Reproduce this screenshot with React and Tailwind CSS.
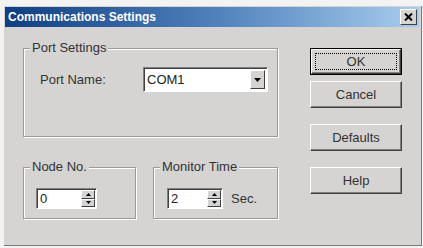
const font = { fontFamily: '"Liberation Sans", Arial, sans-serif' };

const DownArrow = ({ className = '' }) => (
  <svg width="7" height="4" viewBox="0 0 7 4" className={className}>
    <path d="M0 0h7L3.5 4z" fill="#000" />
  </svg>
);

const UpArrow = () => (
  <svg width="5" height="3" viewBox="0 0 5 3">
    <path d="M0 3h5L2.5 0z" fill="#000" />
  </svg>
);

const SmallDown = () => (
  <svg width="5" height="3" viewBox="0 0 5 3">
    <path d="M0 0h5L2.5 3z" fill="#000" />
  </svg>
);

const GroupBox = ({ title, className = '', children }) => (
  <div
    className={`relative border border-[#9a9a9a] shadow-[1px_1px_0_#fff,inset_1px_1px_0_#fff] ${className}`}
  >
    <span className="absolute left-[6px] top-[-9px] bg-[#d5d4d2] px-[2px] text-[13px] leading-[16px] text-[#333]">
      {title}
    </span>
    {children}
  </div>
);

const SpinBox = ({ value, width }) => (
  <div
    className={`flex h-[21px] ${width} border-t border-l border-[#808080] border-b border-r border-b-white border-r-white bg-white shadow-[inset_1px_1px_0_#404040]`}
  >
    <div className="flex-1 pl-[3px] pt-[2px] text-[13px] leading-[16px] text-[#222]">{value}</div>
    <div className="flex w-[15px] flex-col py-[1px] pr-[1px]">
      <div className="flex flex-1 items-center justify-center border-t border-l border-white border-b border-r border-b-[#404040] border-r-[#404040] bg-[#d5d4d2]">
        <UpArrow />
      </div>
      <div className="flex flex-1 items-center justify-center border-t border-l border-white border-b border-r border-b-[#404040] border-r-[#404040] bg-[#d5d4d2]">
        <SmallDown />
      </div>
    </div>
  </div>
);

const Button = ({ label, isDefault }) => (
  <div
    className={`h-[27px] w-[92px] ${isDefault ? 'border border-black' : ''}`}
  >
    <div className="flex h-full w-full items-center justify-center border-t border-l border-white border-b border-r border-b-[#404040] border-r-[#404040] bg-[#d5d4d2] shadow-[inset_-1px_-1px_0_#808080]">
      <span
        className={`flex h-[17px] w-[82px] items-center justify-center text-[13px] text-[#333] ${isDefault ? 'border border-dotted border-black' : ''}`}
      >
        {label}
      </span>
    </div>
  </div>
);

const App = () => {
  return (
    <div className="h-[248px] w-[423px] bg-[#f3f3f3] pl-[4px] pt-[6px] pb-[2px] pr-[1px]" style={font}>
      <div className="flex h-full flex-col border-r border-b border-[#7a7a7a] bg-[#d5d4d2] pl-[1px] pr-[2px] pt-[1px]">
        <div className="flex h-[20px] items-center justify-between bg-gradient-to-r from-[#0f3f82] via-[#4f80bb] to-[#a8cdee] pl-[3px] pr-[2px]">
          <span className="text-[12px] font-bold text-white">Communications Settings</span>
          <div className="flex h-[16px] w-[17px] items-center justify-center border-t border-l border-white border-b border-r border-b-[#404040] border-r-[#404040] bg-[#d5d4d2]">
            <svg width="9" height="8" viewBox="0 0 9 8">
              <path d="M1 0.5l7 7M8 0.5l-7 7" stroke="#000" strokeWidth="2" />
            </svg>
          </div>
        </div>

        <div className="flex pl-[18px] pt-[21px]">
          <div className="flex w-[255px] flex-col">
            <GroupBox title="Port Settings" className="h-[89px]">
              <div className="flex items-center pl-[16px] pt-[18px]">
                <span className="w-[103px] text-[13px] text-[#333]">Port Name:</span>
                <div className="flex h-[25px] w-[125px] items-center border-t border-l border-[#808080] border-b border-r border-b-white border-r-white bg-white shadow-[inset_1px_1px_0_#404040]">
                  <span className="flex-1 pl-[3px] text-[13px] text-[#222]">COM1</span>
                  <div className="mr-[2px] flex h-[19px] w-[15px] items-center justify-center border-t border-l border-white border-b border-r border-b-[#404040] border-r-[#404040] bg-[#d5d4d2]">
                    <DownArrow />
                  </div>
                </div>
              </div>
            </GroupBox>

            <div className="mt-[30px] flex gap-[17px]">
              <GroupBox title="Node No." className="h-[52px] w-[113px]">
                <div className="pl-[12px] pt-[20px]">
                  <SpinBox value="0" width="w-[61px]" />
                </div>
              </GroupBox>
              <GroupBox title="Monitor Time" className="h-[52px] w-[125px]">
                <div className="flex items-center pl-[13px] pt-[20px]">
                  <SpinBox value="2" width="w-[56px]" />
                  <span className="ml-[8px] text-[13px] text-[#333]">Sec.</span>
                </div>
              </GroupBox>
            </div>
          </div>

          <div className="ml-[32px] flex flex-col">
            <Button label="OK" isDefault />
            <div className="mt-[6px]">
              <Button label="Cancel" />
            </div>
            <div className="mt-[16px]">
              <Button label="Defaults" />
            </div>
            <div className="mt-[16px]">
              <Button label="Help" />
            </div>
          </div>
        </div>
      </div>
    </div>
  );
};

export default App;
